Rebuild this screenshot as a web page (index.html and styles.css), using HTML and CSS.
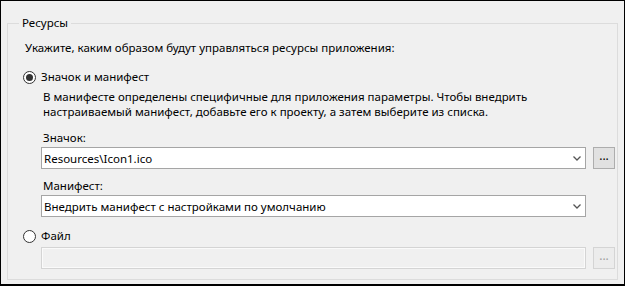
FILE: index.html
```html
<!DOCTYPE html>
<html>
<head>
    <title>Ресурсы</title>
    <meta charset="utf-8">
    <link rel="stylesheet" href="styles.css">
</head>
<body>
    <div class="window">
        <fieldset class="group">
            <legend>Ресурсы</legend>
            <p class="hint">Укажите, каким образом будут управляться ресурсы приложения:</p>

            <label class="radio">
                <span class="radio-dot checked"></span>
                Значок и манифест
            </label>
            <div class="option-body">
                <p class="desc">В манифесте определены специфичные для приложения параметры. Чтобы внедрить<br>настраиваемый манифест, добавьте его к проекту, а затем выберите из списка.</p>

                <div class="field-label first">Значок:</div>
                <div class="row">
                    <div class="combo">
                        <span class="combo-text">Resources\Icon1.ico</span>
                        <svg class="arrow" width="8" height="5" viewBox="0 0 8 5"><path d="M0.5 0.5 L4 4 L7.5 0.5" fill="none" stroke="#555" stroke-width="1.3"/></svg>
                    </div>
                    <button class="browse">...</button>
                </div>

                <div class="field-label">Манифест:</div>
                <div class="row">
                    <div class="combo">
                        <span class="combo-text">Внедрить манифест с настройками по умолчанию</span>
                        <svg class="arrow" width="8" height="5" viewBox="0 0 8 5"><path d="M0.5 0.5 L4 4 L7.5 0.5" fill="none" stroke="#555" stroke-width="1.3"/></svg>
                    </div>
                </div>
            </div>

            <label class="radio radio-file">
                <span class="radio-dot"></span>
                Файл
            </label>
            <div class="option-body">
                <div class="row row-file">
                    <div class="textbox disabled"></div>
                    <button class="browse disabled">...</button>
                </div>
            </div>
        </fieldset>
    </div>
</body>
</html>
```

FILE: styles.css
```css
body {
    margin: 0;
    font-family: "Noto Sans", "Open Sans", sans-serif;
    font-size: 11.5px;
    color: #000;
}

.window {
    width: 625px;
    height: 286px;
    box-sizing: border-box;
    border: 1px solid #000;
    border-bottom-width: 2px;
    background-color: #f0f0f0;
    padding: 14px 6px 0 6px;
}

.group {
    margin: 0;
    padding: 0 0 0 15px;
    height: 265px;
    box-sizing: border-box;
    border: 1px solid #dcdcdc;
}

.group legend {
    margin-left: -4px;
    padding: 0 3px;
    line-height: 16px;
}

.hint {
    margin: 9px 0 0 2px;
    line-height: 16px;
}

.radio {
    display: flex;
    align-items: center;
    gap: 5px;
    margin-top: 13px;
    height: 16px;
    line-height: 16px;
}

.radio-dot {
    width: 11px;
    height: 11px;
    border: 1px solid #333;
    border-radius: 50%;
    background-color: #fff;
    display: flex;
    align-items: center;
    justify-content: center;
}

.radio-dot.checked::after {
    content: "";
    width: 7px;
    height: 7px;
    border-radius: 50%;
    background-color: #333;
}

.radio-file {
    margin-top: 11px;
}

.option-body {
    padding-left: 18px;
}

.desc {
    margin: 4px 0 0 2px;
    line-height: 15px;
}

.field-label {
    margin: 9px 0 0 2px;
    line-height: 16px;
}

.field-label.first {
    margin-top: 11px;
}

.row {
    display: flex;
    gap: 7px;
    margin-top: 1px;
}

.row-file {
    margin-top: 3px;
}

.combo,
.textbox {
    width: 545px;
    height: 22px;
    box-sizing: border-box;
    border: 1px solid #a5a5a5;
    background-color: #fff;
    display: flex;
    align-items: center;
    justify-content: space-between;
    padding: 0 4px 0 2px;
}

.arrow {
    margin-top: 1px;
}

.browse {
    width: 22px;
    height: 22px;
    padding: 0 0 4px 0;
    border: 1px solid #adadad;
    background-color: #e1e1e1;
    font-family: inherit;
    font-size: 12px;
    line-height: 10px;
    color: #000;
}

.textbox.disabled {
    border-color: #d4d4d4;
    background-color: #f0f0f0;
    box-shadow: inset 0 0 0 1px #fafafa;
}

.browse.disabled {
    border-color: #d4d4d4;
    background-color: #ececec;
    color: #a0a0a0;
}
```
